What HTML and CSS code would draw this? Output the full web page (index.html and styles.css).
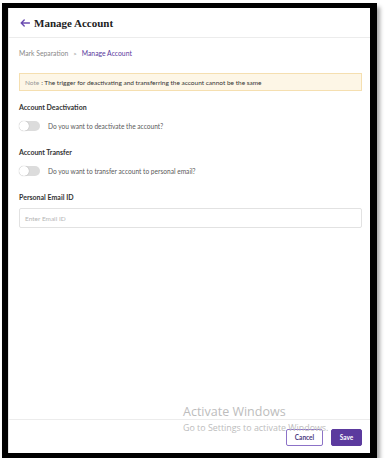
FILE: index.html
```html
<!DOCTYPE html>
<html>
<head>
<meta charset="utf-8">
<link rel="stylesheet" href="styles.css">
</head>
<body>
<div class="frame">
  <div class="page">
    <header class="header">
      <svg class="back" width="10" height="8" viewBox="0 0 10 8"><path d="M9.5 4H1.2M4.2 1 1.2 4l3 3" fill="none" stroke="#6a4bb0" stroke-width="1.4" stroke-linecap="round" stroke-linejoin="round"/></svg>
      <h1 class="title">Manage Account</h1>
    </header>
    <main class="content">
      <nav class="crumbs"><span class="crumb">Mark Separation</span><span class="sep">&gt;</span><span class="crumb active">Manage Account</span></nav>
      <div class="note"><span class="note-key">Note</span> : The trigger for deactivating and transferring the account cannot be the same</div>
      <div class="field">
        <div class="label">Account Deactivation</div>
        <div class="toggle-row"><span class="toggle"></span><span class="toggle-text">Do you want to deactivate the account?</span></div>
      </div>
      <div class="field">
        <div class="label">Account Transfer</div>
        <div class="toggle-row"><span class="toggle"></span><span class="toggle-text">Do you want to transfer account to personal email?</span></div>
      </div>
      <div class="field">
        <div class="label">Personal Email ID</div>
        <div class="input">Enter Email ID</div>
      </div>
    </main>
    <footer class="footer">
      <button class="btn cancel">Cancel</button>
      <button class="btn save">Save</button>
    </footer>
    <div class="watermark">
      <div class="wm-title">Activate Windows</div>
      <div class="wm-sub">Go to Settings to activate Windows.</div>
    </div>
  </div>
</div>
</body>
</html>
```
FILE: styles.css
```css
* { box-sizing: border-box; }
html, body { margin: 0; padding: 0; background: #fff; }
body { font-family: Lato, "Open Sans", sans-serif; color: #333; }
.frame {
  margin: 3px 0 0 2px;
  width: 375px;
  height: 455px;
  border-style: solid;
  border-color: #000;
  border-width: 5px 7px 5px 6px;
  box-shadow: 3px 4px 4px rgba(0,0,0,0.35);
}
.page {
  position: relative;
  height: 100%;
  background: #fff;
  display: flex;
  flex-direction: column;
  border-left: 1px solid #e4e4e4;
}
.header {
  height: 30px;
  display: flex;
  align-items: center;
  gap: 4px;
  padding: 0 0 0 11px;
  border-bottom: 1px solid #ececec;
}
.back { display: block; }
.title {
  margin: 0;
  font-family: "Liberation Serif", serif;
  font-weight: bold;
  font-size: 11px;
  color: #222;
}
.content {
  flex: 1;
  padding: 10px 8px 0 10px;
}
.crumbs { font-size: 6.8px; color: #8a8a8a; display: flex; gap: 5px; height: 10px; align-items: center; }
.crumb.active { color: #5b3a9e; }
.sep { font-size: 6px; }
.note {
  margin-top: 15px;
  height: 18px;
  background: #fdf6e6;
  border: 1px solid #f5dfb0;
  font-size: 6.5px;
  color: #333;
  display: flex;
  align-items: center;
  padding-left: 5px;
}
.note-key { color: #999; margin-right: 2px; }
.field { margin-top: 12px; }
.field + .field { margin-top: 17px; }
.label { font-size: 7px; font-weight: bold; color: #333; height: 9px; line-height: 9px; }
.toggle-row { display: flex; align-items: center; gap: 8px; margin-top: 9px; }
.toggle {
  position: relative;
  width: 21px; height: 10px;
  border-radius: 5px;
  background: #dcdcdc;
  display: block;
}
.toggle::after {
  content: "";
  position: absolute;
  left: 0; top: 0;
  width: 10px; height: 10px;
  border-radius: 50%;
  background: #fff;
  box-shadow: 0 0 1px rgba(0,0,0,0.35);
}
.toggle-text { font-size: 6.6px; color: #5a5a5a; }
.input {
  margin-top: 6px;
  height: 20px;
  border: 1px solid #e2e2e2;
  border-radius: 2px;
  font-size: 6.5px;
  color: #b5b5b5;
  display: flex;
  align-items: center;
  padding-left: 5px;
}
.footer {
  height: 34px;
  border-top: 1px solid #ececec;
  display: flex;
  justify-content: flex-end;
  align-items: center;
  gap: 8px;
  padding: 1px 8px 0 0;
}
.btn {
  height: 17px;
  font-family: Lato, sans-serif;
  font-size: 6.5px;
  font-weight: bold;
  border-radius: 2px;
  padding: 0;
  cursor: pointer;
}
.cancel { width: 37px; background: #fff; border: 1px solid #8c72c7; color: #4a3a80; }
.save { width: 31px; background: #5b3a9e; border: 1px solid #5b3a9e; color: #fff; }
.watermark {
  position: absolute;
  left: 174px;
  top: 396px;
  color: #bdbdbd;
  font-family: "Open Sans", sans-serif;
  pointer-events: none;
}
.wm-title { font-size: 12.5px; line-height: 16px; }
.wm-sub { font-size: 8.9px; line-height: 12px; margin-top: 2px; }
```
